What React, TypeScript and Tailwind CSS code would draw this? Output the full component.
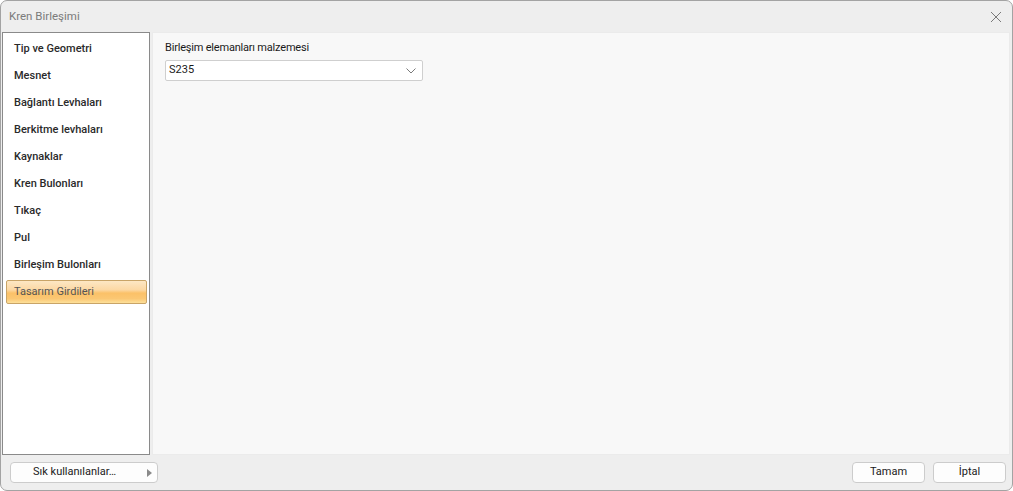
import React from "react";

const items = [
  "Tip ve Geometri",
  "Mesnet",
  "Bağlantı Levhaları",
  "Berkitme levhaları",
  "Kaynaklar",
  "Kren Bulonları",
  "Tıkaç",
  "Pul",
  "Birleşim Bulonları",
  "Tasarım Girdileri",
];

export default function App() {
  return (
    <div
      className="w-[1013px] h-[491px] bg-white text-[11px]"
      style={{ fontFamily: 'Roboto, "Noto Sans", sans-serif' }}
    >
      <div className="w-full h-full border border-[#a3a3a3] rounded-[7px] bg-[#eeeeee] flex flex-col overflow-hidden">
        {/* Title bar */}
        <div className="h-[31px] flex items-center justify-between pl-[8px] pr-[10px] shrink-0">
          <span className="text-[11.5px] text-[#7b7b7b]">Kren Birleşimi</span>
          <svg width="12" height="12" viewBox="0 0 12 12">
            <path d="M1 1 L11 11 M11 1 L1 11" stroke="#7a7a7a" strokeWidth="1" fill="none" />
          </svg>
        </div>
        {/* Main */}
        <div className="flex-1 flex pl-[1px] pr-[2px] gap-[2px] min-h-0">
          <div className="w-[148px] bg-white border border-[#8a8a8a] pt-[3px] pl-[3px] pr-[2px] flex flex-col">
            {items.map((it, i) =>
              i === items.length - 1 ? (
                <div
                  key={it}
                  className="h-[24px] mt-[1px] w-[141px] rounded-[2px] border border-[#c9a467] flex items-center pl-[7px] text-[#555555]"
                  style={{
                    background:
                      "linear-gradient(to bottom, #fde7c4 0%, #fcd8a4 40%, #fbc168 55%, #fbc773 80%, #fde09a 100%)",
                  }}
                >
                  {it}
                </div>
              ) : (
                <div key={it} className="h-[27px] flex items-center pl-[8px] text-[#2a2a2a] font-medium">
                  {it}
                </div>
              )
            )}
          </div>
          <div className="flex-1 bg-[#f8f8f8] border border-[#ebebeb] pl-[12px] pt-[7px]">
            <div className="text-[#1a1a1a] leading-[16px] h-[16px] tracking-[-0.2px]">Birleşim elemanları malzemesi</div>
            <div className="mt-[4px] w-[258px] h-[21px] bg-white border border-[#cfcfcf] rounded-[2px] flex items-center justify-between pl-[3px] pr-[6px]">
              <span className="text-[#1a1a1a]">S235</span>
              <svg width="10" height="6" viewBox="0 0 10 6">
                <path d="M0.5 0.5 L5 5 L9.5 0.5" stroke="#7a7a7a" strokeWidth="1" fill="none" />
              </svg>
            </div>
          </div>
        </div>
        {/* Bottom bar */}
        <div className="h-[35px] shrink-0 flex items-center justify-between pl-[9px] pr-[6px]">
          <div className="w-[148px] h-[21px] rounded-[4px] border border-[#cccccc] bg-[#fdfdfd] flex items-center pl-[22px] pr-[5px] justify-between">
            <span className="text-[#1a1a1a]">Sık kullanılanlar…</span>
            <svg width="5" height="8" viewBox="0 0 5 8">
              <path d="M0 0 L5 4 L0 8 Z" fill="#8a8a8a" />
            </svg>
          </div>
          <div className="flex gap-[8px]">
            <div className="w-[73px] h-[21px] rounded-[4px] border border-[#cccccc] bg-[#fdfdfd] flex items-center justify-center text-[#1a1a1a]">
              Tamam
            </div>
            <div className="w-[73px] h-[21px] rounded-[4px] border border-[#cccccc] bg-[#fdfdfd] flex items-center justify-center text-[#1a1a1a]">
              İptal
            </div>
          </div>
        </div>
      </div>
    </div>
  );
}
